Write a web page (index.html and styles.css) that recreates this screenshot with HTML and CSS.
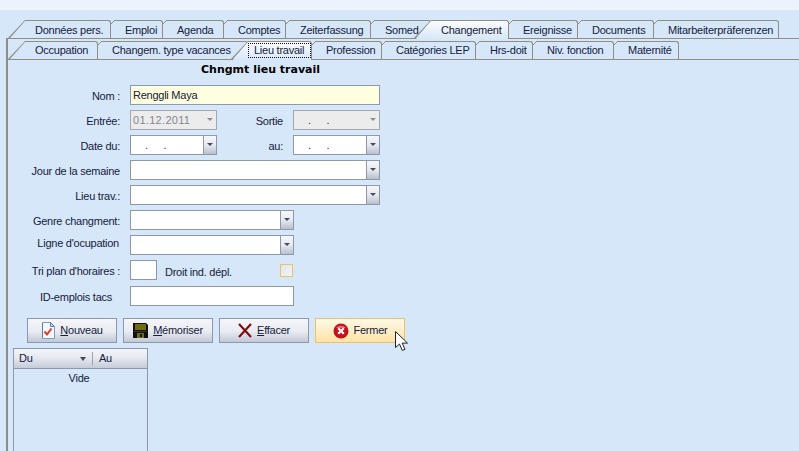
FILE: index.html
```html
<!DOCTYPE html>
<html lang="fr">
<head>
<meta charset="utf-8">
<title>Chngmt lieu travail</title>
<link rel="stylesheet" href="styles.css">
</head>
<body>
<div class="top-strip"></div>
<main class="main">
  <nav class="tabs tabs-primary">
    <div class="tab tab-first">Données pers.</div>
    <div class="tab">Emploi</div>
    <div class="tab">Agenda</div>
    <div class="tab">Comptes</div>
    <div class="tab">Zeiterfassung</div>
    <div class="tab">Somed</div>
    <div class="tab tab-active">Changement</div>
    <div class="tab">Ereignisse</div>
    <div class="tab">Documents</div>
    <div class="tab">Mitarbeiterpräferenzen</div>
  </nav>
  <section class="panel">
    <nav class="tabs tabs-secondary">
      <div class="tab tab-first">Occupation</div>
      <div class="tab">Changem. type vacances</div>
      <div class="tab tab-active tab-focus"><span class="focus">Lieu travail</span></div>
      <div class="tab">Profession</div>
      <div class="tab">Catégories LEP</div>
      <div class="tab">Hrs-doit</div>
      <div class="tab">Niv. fonction</div>
      <div class="tab">Maternité</div>
    </nav>
    <h1 class="title">Chngmt lieu travail</h1>
    <form class="form">
      <div class="row">
        <label class="label">Nom :</label>
        <div class="field field-full field-name">Renggli Maya</div>
      </div>
      <div class="row">
        <label class="label">Entrée:</label>
        <div class="field field-half field-disabled"><span class="value">01.12.2011</span><span class="drop drop-flat"></span></div>
        <label class="label label-second">Sortie</label>
        <div class="field field-half field-disabled"><span class="dots">.&nbsp;&nbsp;&nbsp;.</span><span class="drop drop-flat"></span></div>
      </div>
      <div class="row">
        <label class="label">Date du:</label>
        <div class="field field-half"><span class="dots">.&nbsp;&nbsp;&nbsp;.</span><span class="drop"></span></div>
        <label class="label label-second">au:</label>
        <div class="field field-half"><span class="dots">.&nbsp;&nbsp;&nbsp;.</span><span class="drop"></span></div>
      </div>
      <div class="row">
        <label class="label">Jour de la semaine</label>
        <div class="field field-full"><span class="drop"></span></div>
      </div>
      <div class="row">
        <label class="label">Lieu trav.:</label>
        <div class="field field-full"><span class="drop"></span></div>
      </div>
      <div class="row">
        <label class="label">Genre changment:</label>
        <div class="field field-mid"><span class="drop"></span></div>
      </div>
      <div class="row">
        <label class="label label-raised">Ligne d'ocupation</label>
        <div class="field field-mid"><span class="drop"></span></div>
      </div>
      <div class="row">
        <label class="label">Tri plan d'horaires :</label>
        <div class="field field-tiny"></div>
        <span class="check-label">Droit ind. dépl.</span>
        <span class="check"></span>
      </div>
      <div class="row row-id">
        <label class="label label-id">ID-emplois tacs</label>
        <div class="field field-mid"></div>
      </div>
    </form>
    <div class="buttons">
      <button class="btn" type="button">
        <svg class="icon" width="14" height="17" viewBox="0 0 14 17"><path d="M1.5.5h8l4 4v12h-12z" fill="#f4f8fd" stroke="#7d9cc8"/><path d="M9.5.5v4h4z" fill="#bcd3ef" stroke="#5d86bd"/><path d="M1.5 1v15" stroke="#4f7fc0"/><path d="M3.5 9.5l2.5 3 4.5-6" fill="none" stroke="#e03a20" stroke-width="2"/></svg>
        <span><u>N</u>ouveau</span>
      </button>
      <button class="btn" type="button">
        <svg class="icon" width="15" height="15" viewBox="0 0 15 15"><path d="M0 0h13l2 2v13H0z" fill="#111"/><rect x="2" y="1" width="11" height="6" fill="#6f6f10"/><rect x="4" y="10" width="7" height="5" fill="#6f6f10"/><rect x="1" y="8" width="13" height="1" fill="#3c3c08"/><rect x="7" y="11" width="2" height="3" fill="#111"/></svg>
        <span><u>M</u>émoriser</span>
      </button>
      <button class="btn" type="button">
        <svg class="icon" width="14" height="15" viewBox="0 0 14 15"><path d="M1 1l12 13M13 1L1 14" stroke="#7c1010" stroke-width="2.2" fill="none"/></svg>
        <span><u>E</u>ffacer</span>
      </button>
      <button class="btn btn-hover" type="button">
        <svg class="icon" width="16" height="16" viewBox="0 0 16 16"><circle cx="8" cy="8" r="7.5" fill="#c8101c"/><path d="M3 5a6 5 0 0 1 10 0z" fill="#ea6a70"/><path d="M5.2 5.2l5.6 5.6M10.8 5.2l-5.6 5.6" stroke="#fff" stroke-width="2.2"/></svg>
        <span>Fermer</span>
      </button>
    </div>
    <div class="list">
      <div class="list-head">
        <span class="col-du">Du</span>
        <span class="sort"></span>
        <span class="col-au">Au</span>
      </div>
      <div class="list-empty">Vide</div>
    </div>
  </section>
</main>
<svg class="cursor" width="14" height="21" viewBox="0 0 14 21"><path d="M.5.5v16l4-3.5 2.8 6.5 2.7-1.2-2.8-6.2h5.3z" fill="#fff" stroke="#222"/></svg>
</body>
</html>
```
FILE: styles.css
```css
* { box-sizing: border-box; }
html, body { margin: 0; height: 451px; overflow: hidden; }
body {
  background: #d7e7fa;
  color: #14213a;
  font: 11px/13px "Liberation Sans", Arial, sans-serif;
  letter-spacing: -.25px;
  position: relative;
}
.top-strip { height: 10px; background: #ebf3fd; }
.main { padding-top: 10px; }

/* Tabs */
.tabs {
  display: grid;
  height: 19px;
  border-bottom: 1px solid #8f8d84;
}
.tabs-primary {
  margin-left: 6px;
  padding-left: 19px;
  grid-template-columns: 86px 52px 61px 62px 85px 60px 78px 69px 76px 125px;
}
.tabs-secondary {
  height: 19px;
  padding-left: 17px;
  grid-template-columns: 73px 150px 64px 70px 94px 57px 81px 65px;
}
.tabs-secondary .tab { padding-top: 2px; }
.tab {
  position: relative;
  height: 18px;
  padding: 3px 0 0 14px;
  white-space: nowrap;
  border-top: 1px solid #8f8d84;
  border-right: 1px solid #8f8d84;
  border-top-right-radius: 3px;
}
.tab::before {
  content: "";
  position: absolute;
  left: 0;
  top: -1px;
  width: 4px;
  height: 4px;
  background: linear-gradient(to bottom right, #d7e7fa 44%, #8f8d84 44%, #8f8d84 62%, transparent 62%);
}
.tab-first, .tab-active { padding-left: 10px; }
.tab-first::before, .tab-active::before {
  left: -17px;
  width: 17px;
  height: 18px;
  background: #8f8d84;
  clip-path: polygon(0 100%, 100% 0, 100% 1px, 2px 100%);
}
.tab-active {
  background: linear-gradient(#fcfdff, #d7e7fa);
  height: 19px;
  z-index: 1;
}
.tab-active::after {
  content: "";
  position: absolute;
  left: -15px;
  top: 0;
  width: 15px;
  height: 18px;
  background: linear-gradient(#fcfdff, #d7e7fa);
  clip-path: polygon(0 100%, 100% 0, 100% 100%);
}
.tabs-secondary .tab-focus { padding: 1px 0 0 0; }
.focus {
  display: block;
  width: 63px;
  height: 15px;
  padding-left: 6px;
  line-height: 14px;
  outline: 1px dotted #111;
  outline-offset: -1px;
}

/* Panel */
.panel {
  margin-left: 6px;
  padding-top: 2px;
  height: 413px;
  border-left: 2px solid #8f8d84;
}
.title {
  margin: 0;
  height: 25px;
  padding: 3px 0 0 193px;
  font-family: "DejaVu Sans", sans-serif;
  font-size: 11px;
  font-weight: 700;
  letter-spacing: 0;
  line-height: 13px;
  color: #000;
}

/* Form */
.form { display: flex; flex-direction: column; gap: 5px; }
.row { display: flex; align-items: center; height: 20px; }
.row-id { margin-top: 1px; }
.label {
  width: 112px;
  margin-right: 10px;
  padding-top: 2px;
  text-align: right;
  white-space: nowrap;
}
.label-second { width: 66px; }
.label-raised { position: relative; bottom: 3px; padding-right: 1px; }
.label-id { padding-right: 8px; }
.field {
  position: relative;
  display: flex;
  align-items: center;
  height: 20px;
  padding-left: 2px;
  background: #fff;
  border: 1px solid #8d98ab;
}
.field-full { width: 250px; }
.field-mid { width: 164px; }
.field-half { width: 87px; }
.field-tiny { width: 27px; }
.field-name { background: #ffffdf; }
.field-disabled { background: #ececec; border-color: #a4a8ae; color: #7f8790; }
.value { letter-spacing: .3px; }
.dots {
  padding-left: 12px;
  font-size: 11px;
  letter-spacing: 1.6px;
  white-space: nowrap;
  color: #303030;
}
.drop {
  position: absolute;
  top: 0;
  right: 0;
  bottom: 0;
  width: 13px;
  border-left: 1px solid #8d98ab;
  background: linear-gradient(#f6f7fa, #e6e9ef 50%, #b9bfcc);
}
.drop::after {
  content: "";
  position: absolute;
  left: 3px;
  top: 7px;
  border: 3px solid transparent;
  border-top: 3px solid #404c63;
  border-bottom: 0;
}
.drop-flat { background: none; border: 0; }
.drop-flat::after { border-top-color: #8b8f94; left: 4px; }
.check-label { margin-left: 8px; width: 115px; padding-top: 4px; }
.check {
  width: 13px;
  height: 13px;
  margin-top: 1px;
  border: 1px solid #e9c46c;
  background: linear-gradient(135deg, #dfe5ee, #f4f4f4);
}

/* Buttons */
.buttons { display: flex; gap: 6px; margin: 12px 0 0 19px; }
.btn {
  display: flex;
  align-items: center;
  justify-content: center;
  gap: 5px;
  width: 90px;
  height: 25px;
  padding: 0;
  color: #14213a;
  font: inherit;
  letter-spacing: inherit;
  border: 1px solid #8d98ab;
  background: linear-gradient(#f5f6fa, #e8ebf1 55%, #c1c7d5);
}
.btn-hover {
  border-color: #e8c36a;
  background: linear-gradient(#fff9e6, #feeec8 50%, #fee2a3);
}
.btn u { text-decoration-thickness: 1px; }
.icon { flex: none; }

/* List */
.list {
  width: 135px;
  height: 120px;
  margin: 5px 0 0 5px;
  border: 1px solid #8d98ab;
}
.list-head {
  display: flex;
  align-items: center;
  height: 20px;
  padding-left: 5px;
  border-bottom: 1px solid #8d98ab;
  background: linear-gradient(#f3f5f9, #e6e9f0 45%, #c6cbd9);
}
.col-du { width: 61px; }
.sort {
  width: 0;
  height: 0;
  margin-right: 6px;
  border: 3.5px solid transparent;
  border-top: 4px solid #3c475e;
  border-bottom: 0;
}
.col-au {
  height: 13px;
  padding-left: 6px;
  border-left: 1px solid #9aa2b2;
}
.list-empty { padding: 3px 3px 0 0; text-align: center; }

/* Mouse pointer */
.cursor { position: absolute; left: 395px; top: 331px; }
```
